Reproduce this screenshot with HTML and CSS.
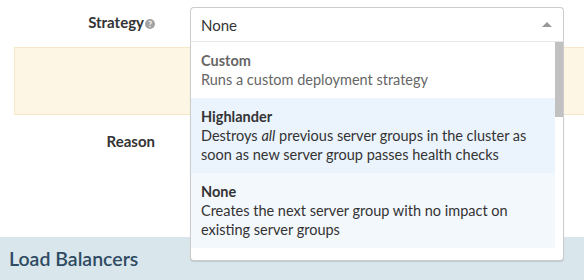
FILE: index.html
```html
<!DOCTYPE html>
<html>
<head>
<meta charset="utf-8">
<link rel="stylesheet" href="styles.css">
</head>
<body>
<div class="page">
  <div class="form">
    <div class="row row-strategy">
      <div class="label">Strategy<span class="help">?</span></div>
      <div class="control">
        <div class="select">
          <div class="select-head">
            <span class="value">None</span>
            <span class="caret"></span>
          </div>
          <div class="menu">
            <div class="options">
              <div class="option disabled">
                <div class="opt-title">Custom</div>
                <div class="opt-desc">Runs a custom deployment strategy</div>
              </div>
              <div class="option hover">
                <div class="opt-title">Highlander</div>
                <div class="opt-desc">Destroys <em>all</em> previous server groups in the cluster as soon as new server group passes health checks</div>
              </div>
              <div class="option selected">
                <div class="opt-title">None</div>
                <div class="opt-desc">Creates the next server group with no impact on existing server groups</div>
              </div>
            </div>
            <div class="scrollbar"><div class="thumb"></div></div>
          </div>
        </div>
      </div>
    </div>
    <div class="alert"></div>
    <div class="row row-reason">
      <div class="label label-reason">Reason</div>
    </div>
  </div>
  <div class="section-head">Load Balancers</div>
</div>
</body>
</html>
```
FILE: styles.css
```css
* { box-sizing: border-box; }
body {
  margin: 0;
  font-family: "Lato", "Liberation Sans", sans-serif;
  color: #333;
  background: #fff;
  width: 584px;
  height: 280px;
  overflow: hidden;
}
.page { display: flex; flex-direction: column; height: 280px; }
.form { flex: 1; }
.row { display: flex; }
.row-strategy { padding-top: 7px; height: 47px; }
.label {
  width: 155px;
  text-align: right;
  font-weight: 700;
  font-size: 15px;
  line-height: 30px;
}
.help {
  display: inline-block;
  width: 10px;
  height: 10px;
  border-radius: 50%;
  background: #a3a3a3;
  color: #fff;
  font-size: 8px;
  line-height: 10px;
  text-align: center;
  vertical-align: 1px;
  margin-left: 1px;
}
.control { position: relative; margin-left: 35px; width: 374px; }
.select { position: absolute; left: 0; top: 0; width: 374px; z-index: 5; }
.select-head {
  height: 35px;
  border: 1px solid #ccc;
  border-bottom: 1px solid #e6e6e6;
  border-radius: 4px 4px 0 0;
  background: #fff;
  display: flex;
  align-items: center;
  padding: 0 10px;
  font-size: 15px;
}
.value { flex: 1; }
.caret {
  width: 0; height: 0;
  border-left: 5px solid transparent;
  border-right: 5px solid transparent;
  border-bottom: 5px solid #999;
  margin-right: 1px;
}
.menu {
  display: flex;
  background: #fff;
  border: 1px solid #ccc;
  border-top: none;
  border-radius: 0 0 4px 4px;
  box-shadow: 0 1px 1px rgba(0,0,0,0.12);
  padding-bottom: 12px;
}
.options { flex: 1; }
.option { padding: 9px 10px; font-size: 14.5px; line-height: 19px; }
.opt-title { font-weight: 700; }
.disabled { color: #666; }
.hover { background: #ebf3fd; }
.selected { background: #f3f8fd; }
.scrollbar { width: 8px; }
.thumb { height: 75px; background: #c1c1c1; }
.alert {
  margin: 0 0 0 14px;
  height: 68px;
  background: #fdf6e4;
  border: 1px solid #f6e7c8;
  border-right: none;
}
.row-reason { height: 54px; }
.label-reason { line-height: 52px; }
.section-head {
  height: 43px;
  background: #d9e6eb;
  color: #2f4b63;
  font-size: 19.5px;
  font-weight: 600;
  padding-left: 9px;
  line-height: 43px;
}
```
